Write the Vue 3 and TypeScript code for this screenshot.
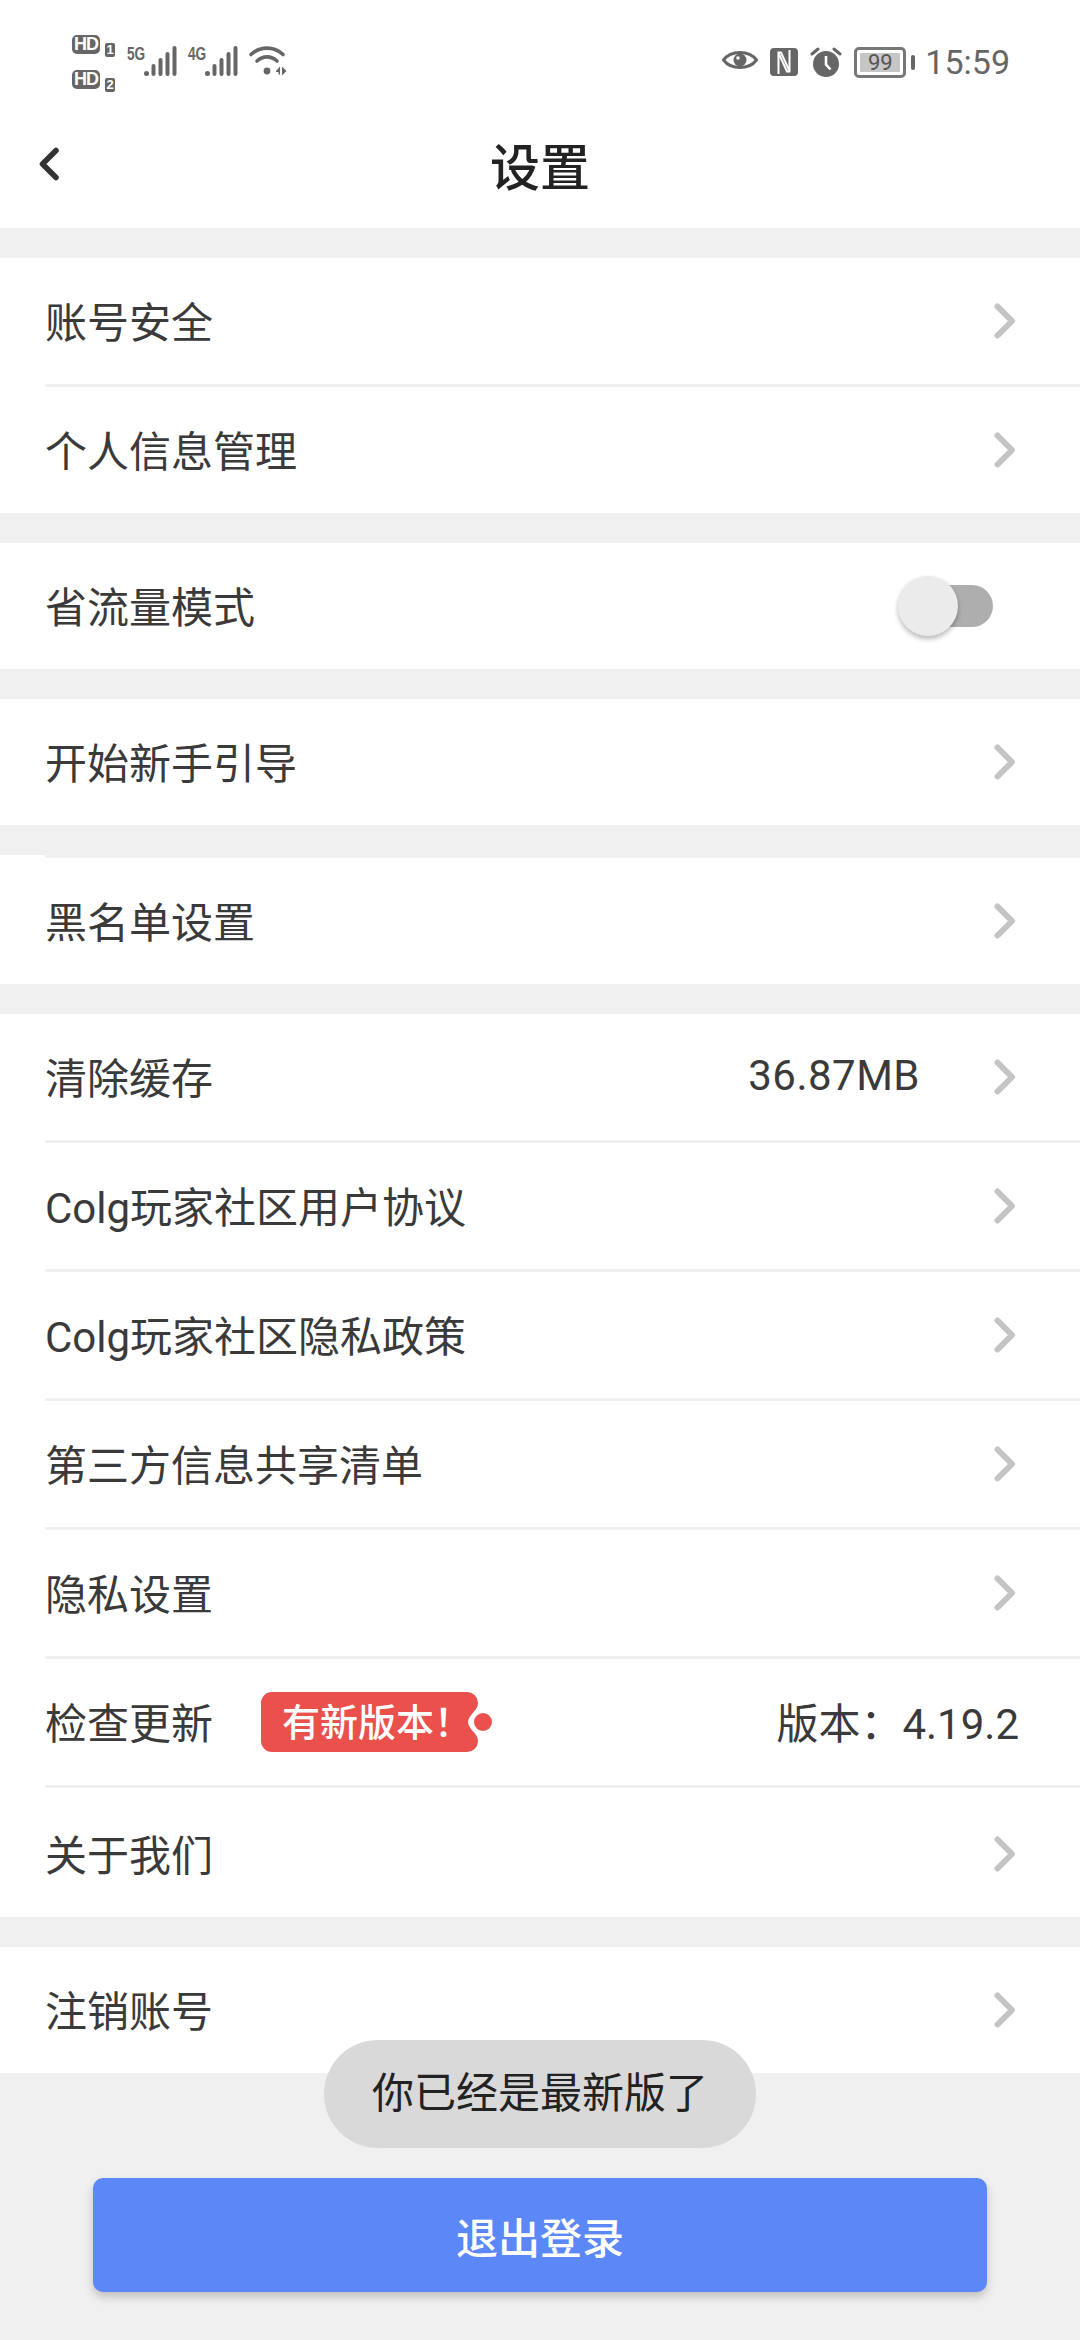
<template>
  <div class="page">
    <!-- status bar -->
    <div class="status">
      <div class="status-left">
        <div class="hd-stack">
          <div v-for="n in [1, 2]" :key="n" class="hd">
            <span class="hd-box">HD</span>
            <span class="hd-num">{{ n }}</span>
          </div>
        </div>
        <div v-for="net in ['5G', '4G']" :key="net" class="signal">
          <span class="net">{{ net }}</span>
          <svg width="33" height="30" viewBox="0 0 33 30">
            <circle cx="2.5" cy="27.5" r="2.5" fill="#666" />
            <rect x="7.5" y="18" width="4" height="12" rx="2" fill="#666" />
            <rect x="14.5" y="12" width="4" height="18" rx="2" fill="#666" />
            <rect x="21.5" y="6" width="4" height="24" rx="2" fill="#666" />
            <rect x="28.5" y="0" width="4" height="30" rx="2" fill="#666" />
          </svg>
        </div>
        <svg class="wifi" width="38" height="32" viewBox="0 0 38 32">
          <path d="M2 10.5C11 2 25 2 34 10.5" fill="none" stroke="#666" stroke-width="3.6" stroke-linecap="round" />
          <path d="M8 17C14 11.5 22 11.5 28 17" fill="none" stroke="#666" stroke-width="3.6" stroke-linecap="round" />
          <circle cx="18" cy="27" r="3.4" fill="#666" />
          <path d="M27 27l4-4.500v8h-1.500v-2.500h-2.500zM33 22.500l4.500 4.500-4.500 4.500z" fill="#666" />
        </svg>
      </div>
      <div class="status-right">
        <svg class="eye" width="36" height="24" viewBox="0 0 36 24">
          <path d="M1.500 12C9 2 27 2 34.500 12 27 22 9 22 1.500 12Z" fill="none" stroke="#666" stroke-width="3" stroke-linejoin="round" />
          <circle cx="18" cy="12" r="6.500" fill="#666" />
          <circle cx="16" cy="10" r="1.800" fill="#fff" />
        </svg>
        <svg class="nfc" width="28" height="28" viewBox="0 0 28 28">
          <rect width="28" height="28" rx="4" fill="#666" />
          <path d="M8.500 26V4.500h2.500L19.500 23" fill="none" stroke="#fff" stroke-width="2" />
          <path d="M19.500 2V23.500H17L8.500 5" fill="none" stroke="#fff" stroke-width="2" />
        </svg>
        <svg class="alarm" width="32" height="30" viewBox="0 0 32 30">
          <circle cx="16" cy="17" r="13" fill="#666" />
          <path d="M16 9v8.500l4.500 5" fill="none" stroke="#fff" stroke-width="2.600" />
          <path d="M2 7l6-5M30 7l-6-5" fill="none" stroke="#666" stroke-width="3" stroke-linecap="round" />
        </svg>
        <div class="battery">
          <div class="battery-body"><span class="battery-level">99</span></div>
          <span class="battery-tip"></span>
        </div>
        <span class="time">15:59</span>
      </div>
    </div>

    <!-- title bar -->
    <div class="topbar">
      <svg class="back" width="22" height="34" viewBox="0 0 22 34">
        <path d="M18 3.500L4.500 17 18 30.500" fill="none" stroke="#333" stroke-width="5.500" stroke-linecap="round" stroke-linejoin="round" />
      </svg>
      <h1 class="title">设置</h1>
    </div>

    <!-- setting groups -->
    <section v-for="(group, i) in groups" :key="i" class="group">
      <template v-for="(row, j) in group" :key="row.label">
        <div v-if="j > 0 || row.leadDivider" class="divider"></div>
        <div class="row" :class="{ tail: row.tail }">
          <span class="label">{{ row.label }}</span>
          <span v-if="row.tag" class="tag">
            <svg class="tag-bg" width="232" height="60" viewBox="0 0 232 60">
              <path d="M11 0H206a11 11 0 0 1 11 10.500c0 4-1.500 6-4 9-3 3.500-6 7-6 10.500s3 7 6 10.500c2.500 3 4 5 4 9A11 11 0 0 1 206 60H11A11 11 0 0 1 0 49V11A11 11 0 0 1 11 0Z" fill="#ea504c" />
              <circle cx="222" cy="30" r="9" fill="#ea504c" />
            </svg>
            <span class="tag-text">{{ row.tag }}</span>
          </span>
          <span v-if="row.value" class="value" :class="{ bare: !row.arrow }">{{ row.value }}</span>
          <svg v-if="row.arrow" class="chevron" width="22" height="36" viewBox="0 0 22 36">
            <path d="M3.500 3.500L18 18 3.500 32.500" fill="none" stroke="#c4c4c4" stroke-width="6" stroke-linecap="round" stroke-linejoin="round" />
          </svg>
          <span v-if="row.toggle" class="switch"><span class="knob"></span></span>
        </div>
      </template>
    </section>

    <button class="logout">退出登录</button>

    <div class="toast">你已经是最新版了</div>
  </div>
</template>

<script setup lang="ts">
interface Row {
  label: string;
  arrow?: boolean;
  value?: string;
  tag?: string;
  toggle?: boolean;
  leadDivider?: boolean;
  tail?: boolean;
}

const groups: Row[][] = [
  [
    { label: "账号安全", arrow: true },
    { label: "个人信息管理", arrow: true },
  ],
  [{ label: "省流量模式", toggle: true }],
  [{ label: "开始新手引导", arrow: true }],
  [{ label: "黑名单设置", arrow: true, leadDivider: true }],
  [
    { label: "清除缓存", value: "36.87MB", arrow: true },
    { label: "Colg玩家社区用户协议", arrow: true },
    { label: "Colg玩家社区隐私政策", arrow: true },
    { label: "第三方信息共享清单", arrow: true },
    { label: "隐私设置", arrow: true },
    { label: "检查更新", tag: "有新版本！", value: "版本：4.19.2" },
    { label: "关于我们", arrow: true, tail: true },
  ],
  [{ label: "注销账号", arrow: true }],
];
</script>

<style>
html,
body {
  margin: 0;
  background: #f0f0f0;
}
</style>

<style scoped>
.page {
  position: relative;
  width: 1080px;
  height: 2340px;
  overflow: hidden;
  display: flex;
  flex-direction: column;
  background: #f0f0f0;
  font-family: Roboto, "Noto Sans CJK SC", sans-serif;
  color: #3a3a3a;
}

/* ── Status bar ── */
.status {
  height: 134px;
  padding: 35px 70px 0 72px;
  box-sizing: border-box;
  display: flex;
  justify-content: space-between;
  align-items: flex-start;
  background: #fff;
}

.status-left {
  display: flex;
  align-items: flex-start;
}

.hd-stack {
  display: flex;
  flex-direction: column;
  gap: 16px;
  margin-right: 12px;
}

.hd {
  display: flex;
  align-items: flex-end;
  gap: 5px;
  height: 19px;
}

.hd-box {
  width: 28px;
  height: 19px;
  border-radius: 5px;
  background: #666;
  color: #fff;
  font: 700 18px/19px "Liberation Sans", sans-serif;
  letter-spacing: -1px;
  text-align: center;
}

.hd-num {
  width: 10px;
  height: 14px;
  margin-bottom: -3px;
  border-radius: 2px;
  background: #666;
  color: #fff;
  font: 700 13px/14px "Liberation Sans", sans-serif;
  text-align: center;
}

.signal {
  display: flex;
  align-items: flex-start;
  margin-top: 11px;
  margin-right: 11px;
}

.net {
  width: 17px;
  color: #666;
  font: 700 19px/15px "Liberation Sans", sans-serif;
  transform: scaleX(0.72);
  transform-origin: left top;
}

.signal svg {
  display: block;
}

.wifi {
  margin-top: 9px;
}

.status-right {
  display: flex;
  align-items: flex-start;
  margin-top: 12px;
}

.eye {
  margin-top: 1px;
}

.nfc {
  margin-left: 12px;
  margin-top: 1px;
}

.alarm {
  margin-left: 12px;
}

.battery {
  display: flex;
  align-items: center;
  margin-left: 12px;
}

.battery-body {
  width: 52px;
  height: 31px;
  box-sizing: border-box;
  border: 3px solid #777;
  border-radius: 5px;
  padding: 3px;
  display: flex;
}

.battery-level {
  flex: 1;
  background: #c6c6c6;
  color: #555;
  font-size: 22px;
  line-height: 19px;
  text-align: center;
}

.battery-tip {
  width: 4px;
  height: 15px;
  margin-left: 5px;
  border-radius: 2px;
  background: #666;
}

.time {
  margin-left: 10px;
  color: #666;
  font-size: 34px;
  line-height: 30px;
}

/* ── Title bar ── */
.topbar {
  position: relative;
  height: 94px;
  background: #fff;
  display: flex;
  align-items: center;
  justify-content: center;
}

.back {
  position: absolute;
  left: 38px;
  top: 13px;
}

.title {
  margin: 0 0 24px;
  font-size: 50px;
  font-weight: 500;
  line-height: 60px;
  color: #222;
}

/* ── Groups ── */
.group {
  margin-top: 30px;
  background: #fff;
}

.row {
  height: 126px;
  padding: 0 64px 0 45px;
  display: flex;
  align-items: center;
  font-size: 42px;
  color: #3a3a3a;
}

.row.tail {
  margin-top: 3px;
}

.divider {
  height: 3px;
  margin-left: 45px;
  background: #f0f0f0;
}

.label {
  margin-bottom: 4px;
  white-space: nowrap;
}

.value {
  margin-bottom: 4px;
  margin-left: auto;
  margin-right: 74px;
  letter-spacing: 0.5px;
}

.value.bare {
  margin-right: -3px;
  letter-spacing: 0;
}

.chevron {
  margin-left: auto;
  flex: none;
}

.value + .chevron {
  margin-left: 0;
}

.tag {
  position: relative;
  width: 232px;
  height: 60px;
  margin-left: 48px;
  flex: none;
}

.tag-bg {
  position: absolute;
  inset: 0;
}

.tag-text {
  position: absolute;
  left: 21px;
  top: 1px;
  color: #fff;
  font-size: 38px;
  font-weight: 500;
  line-height: 60px;
  white-space: nowrap;
}

.switch {
  position: relative;
  width: 88px;
  height: 42px;
  margin-left: auto;
  margin-right: 23px;
  border-radius: 21px;
  background: #aeaeae;
}

.knob {
  position: absolute;
  left: -7px;
  top: -9px;
  width: 60px;
  height: 60px;
  border-radius: 50%;
  background: #ebebeb;
  box-shadow: 0 3px 5px rgba(0, 0, 0, 0.28);
}

/* ── Bottom ── */
.logout {
  width: 894px;
  height: 114px;
  margin: 105px 0 0 93px;
  border: none;
  border-radius: 10px;
  background: #5b87f7;
  color: #fff;
  font-family: inherit;
  font-size: 42px;
  font-weight: 500;
  box-shadow: 0 5px 10px rgba(0, 0, 0, 0.2);
}

.toast {
  position: absolute;
  left: 324px;
  top: 2040px;
  width: 432px;
  height: 108px;
  border-radius: 54px;
  background: #d9d9d9;
  color: #222;
  font-size: 42px;
  line-height: 108px;
  text-align: center;
}
</style>
